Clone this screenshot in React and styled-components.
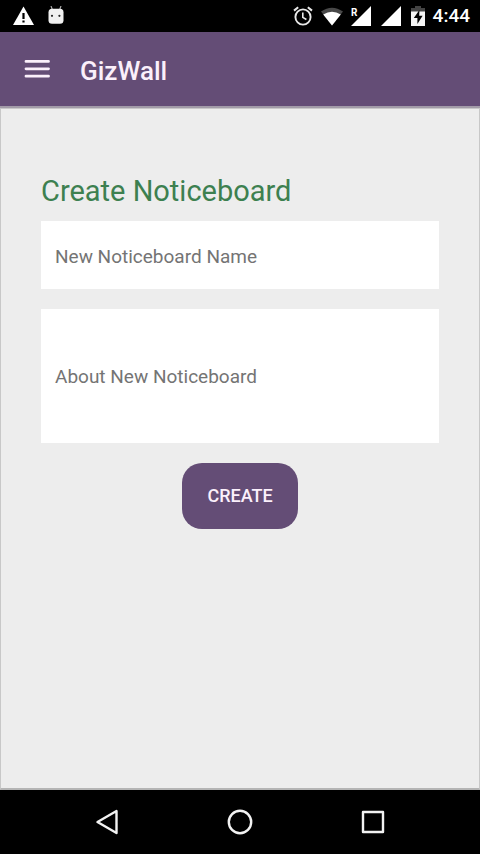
import React from "react";
import styled, { createGlobalStyle } from "styled-components";

const GlobalStyle = createGlobalStyle`
  * {
    box-sizing: border-box;
  }
  body {
    margin: 0;
    background: #000;
    font-family: Roboto, "Liberation Sans", sans-serif;
  }
`;

const Screen = styled.div`
  display: flex;
  flex-direction: column;
  min-height: 100vh;
`;

const StatusBar = styled.div`
  display: flex;
  align-items: center;
  justify-content: space-between;
  height: 32px;
  padding: 0 10px 0 13px;
  background: #000;
  color: #fff;
`;

const StatusGroup = styled.div`
  display: flex;
  align-items: center;
  gap: ${props => props.$gap}px;

  svg {
    display: block;
  }
`;

const Clock = styled.span`
  font-size: 19px;
  font-weight: 500;
  line-height: 32px;
`;

const AppBar = styled.header`
  display: flex;
  align-items: center;
  gap: 30px;
  height: 76px;
  padding: 0 24px;
  background: #644d76;
  border-bottom: 2px solid #a29ba8;
  color: #fbf0fb;
`;

const MenuButton = styled.button`
  display: flex;
  padding: 0;
  border: none;
  background: none;
  color: inherit;
  cursor: pointer;
`;

const Title = styled.h1`
  margin: 0;
  padding-top: 4px;
  font-size: 26px;
  font-weight: 500;
  line-height: 32px;
`;

const Content = styled.main`
  flex: 1;
  padding: 62px 40px;
  background: #ededed;
  border: 1px solid #c8c8c8;
  border-bottom: 2px solid #b4b4b4;
`;

const Form = styled.form`
  display: flex;
  flex-direction: column;
`;

const Heading = styled.h2`
  margin: 0 0 10px;
  color: #3d8050;
  font-size: 29px;
  font-weight: 400;
  line-height: 40px;
`;

const NameInput = styled.input`
  width: 100%;
  height: 68px;
  margin-bottom: 20px;
  padding: 2px 14px 0;
  border: none;
  border-radius: 0;
  background: #fff;
  color: #333;
  font-family: inherit;
  font-size: 19px;

  &::placeholder {
    color: #747474;
    opacity: 1;
  }
`;

const AboutInput = styled(NameInput).attrs({ as: "textarea" })`
  display: block;
  height: 134px;
  padding: 56px 14px;
  line-height: 24px;
  resize: none;
`;

const CreateButton = styled.button`
  align-self: center;
  padding: 22px 25px;
  border: none;
  border-radius: 20px;
  background: #644d76;
  color: #fbf0fb;
  font-family: inherit;
  font-size: 18px;
  font-weight: 500;
  line-height: 22px;
  cursor: pointer;
`;

const NavBar = styled.nav`
  display: grid;
  grid-template-columns: repeat(3, 1fr);
  height: 64px;
  padding: 0 40px;
  background: #000;
`;

const NavButton = styled.button`
  display: flex;
  align-items: center;
  justify-content: center;
  padding: 0;
  border: none;
  background: none;
  color: #f2f2f2;
  cursor: pointer;
`;

const WarningIcon = () => (
  <svg width="21" height="20" viewBox="0 0 21 20">
    <path d="M10.5 0.5 L21 19 H0 Z" fill="#fff" />
    <path d="M9.4 7h2.2v6H9.4zM9.4 14.4h2.2v2.2H9.4z" fill="#000" />
  </svg>
);

const AndroidIcon = () => (
  <svg width="16" height="20" viewBox="0 0 16 20">
    <path d="M3 0 L4.5 4 M13 0 L11.5 4" stroke="#aaa" strokeWidth="1.2" />
    <rect x="0.5" y="2.8" width="15" height="15" rx="3.5" fill="#f0f0f0" />
    <circle cx="4" cy="9.8" r="1.1" fill="#222" />
    <circle cx="11.4" cy="9.8" r="1.1" fill="#222" />
  </svg>
);

const AlarmIcon = () => (
  <svg width="20" height="20" viewBox="0 0 20 20" fill="none" stroke="#e8e8e8">
    <circle cx="10" cy="11" r="7.6" strokeWidth="1.9" />
    <path d="M1 4.6 L5.2 1.2 M19 4.6 L14.8 1.2" strokeWidth="2" />
    <path d="M9.8 6.5 V11.4 L13.4 13.5" strokeWidth="1.6" />
  </svg>
);

const WifiIcon = () => (
  <svg width="22" height="20" viewBox="0 0 22 20">
    <path d="M11 19.5 L0 5.6 Q11 -2 22 5.6 Z" fill="#484848" />
    <path d="M11 19.5 L2.2 8.4 Q11 3 19.8 8.4 Z" fill="#fff" />
  </svg>
);

const SignalIcon = ({ roaming }) => (
  <svg width="20" height="20" viewBox="0 0 20 20">
    <path d="M20 0 V20 H0 Z" fill="#fff" />
    {roaming && (
      <>
        <rect width="8" height="12" fill="#000" />
        <text x="0" y="10" fill="#fff" fontSize="10" fontWeight="700">R</text>
      </>
    )}
  </svg>
);

const BatteryIcon = () => (
  <svg width="14" height="20" viewBox="0 0 14 20">
    <path d="M4 0 H10 V2 H14 V6 H0 V2 H4 Z" fill="#444" />
    <path d="M0 5.5 H14 V20 H0 Z" fill="#f4f4f4" />
    <path d="M8.4 4 L2.8 12 H6.4 V18 L11.6 9.8 H8.2 Z" fill="#000" />
  </svg>
);

const MenuIcon = () => (
  <svg width="26" height="20" viewBox="0 0 26 20" stroke="currentColor" strokeWidth="2.8" strokeLinecap="round">
    <path d="M2 2.4 H24.5 M2 9.8 H24.5 M2 17.2 H24.5" />
  </svg>
);

const App = () => {
  return (
    <>
      <GlobalStyle />
      <Screen>
        <StatusBar>
          <StatusGroup $gap={14}>
            <WarningIcon />
            <AndroidIcon />
          </StatusGroup>
          <StatusGroup $gap={8}>
            <AlarmIcon />
            <WifiIcon />
            <StatusGroup $gap={10}>
              <SignalIcon roaming />
              <SignalIcon />
              <BatteryIcon />
            </StatusGroup>
            <Clock>4:44</Clock>
          </StatusGroup>
        </StatusBar>
        <AppBar>
          <MenuButton type="button" aria-label="Menu">
            <MenuIcon />
          </MenuButton>
          <Title>GizWall</Title>
        </AppBar>
        <Content>
          <Form onSubmit={e => e.preventDefault()}>
            <Heading>Create Noticeboard</Heading>
            <NameInput type="text" aria-label="New Noticeboard Name" placeholder="New Noticeboard Name" />
            <AboutInput aria-label="About New Noticeboard" placeholder="About New Noticeboard" />
            <CreateButton type="submit">CREATE</CreateButton>
          </Form>
        </Content>
        <NavBar>
          <NavButton type="button" aria-label="Back">
            <svg width="24" height="26" viewBox="0 0 24 26" fill="none" stroke="currentColor" strokeWidth="2.4" strokeLinejoin="round">
              <path d="M21.5 2 V24 L2.5 13 Z" />
            </svg>
          </NavButton>
          <NavButton type="button" aria-label="Home">
            <svg width="26" height="26" viewBox="0 0 26 26" fill="none" stroke="currentColor" strokeWidth="2.4">
              <circle cx="13" cy="13" r="11.2" />
            </svg>
          </NavButton>
          <NavButton type="button" aria-label="Recent apps">
            <svg width="24" height="24" viewBox="0 0 24 24" fill="none" stroke="currentColor" strokeWidth="2.4" strokeLinejoin="round">
              <rect x="2" y="2" width="20" height="20" />
            </svg>
          </NavButton>
        </NavBar>
      </Screen>
    </>
  );
};

export default App;
